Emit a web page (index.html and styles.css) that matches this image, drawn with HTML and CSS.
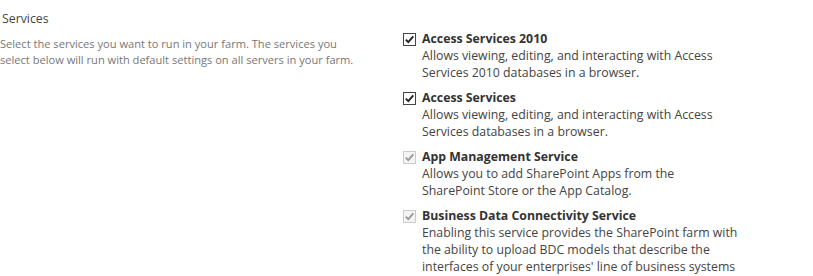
FILE: index.html
```html
<!DOCTYPE html>
<html>
<head>
<meta charset="utf-8">
<link rel="stylesheet" href="styles.css">
</head>
<body>
<div class="section">
  <div class="info">
    <h3 class="title">Services</h3>
    <p class="desc">Select the services you want to run in your farm. The services you select below will run with default settings on all servers in your farm.</p>
  </div>
  <div class="list">
    <div class="item">
      <span class="cb"><svg viewBox="0 0 13 13" width="13" height="13"><rect x="0.5" y="0.5" width="12" height="12" fill="#fff" stroke="#444"/><path d="M2.8 6.6 L5.3 9.2 L10.3 3.3" fill="none" stroke="#222" stroke-width="1.9"/></svg></span>
      <div class="text">
        <div class="name">Access Services 2010</div>
        <div class="about">Allows viewing, editing, and interacting with Access Services 2010 databases in a browser.</div>
      </div>
    </div>
    <div class="item">
      <span class="cb"><svg viewBox="0 0 13 13" width="13" height="13"><rect x="0.5" y="0.5" width="12" height="12" fill="#fff" stroke="#444"/><path d="M2.8 6.6 L5.3 9.2 L10.3 3.3" fill="none" stroke="#222" stroke-width="1.9"/></svg></span>
      <div class="text">
        <div class="name">Access Services</div>
        <div class="about">Allows viewing, editing, and interacting with Access Services databases in a browser.</div>
      </div>
    </div>
    <div class="item">
      <span class="cb"><svg viewBox="0 0 13 13" width="13" height="13"><rect x="0.5" y="0.5" width="12" height="12" fill="#f4f4f4" stroke="#ccc"/><path d="M2.8 6.6 L5.3 9.2 L10.3 3.3" fill="none" stroke="#999" stroke-width="1.9"/></svg></span>
      <div class="text">
        <div class="name">App Management Service</div>
        <div class="about">Allows you to add SharePoint Apps from the SharePoint Store or the App Catalog.</div>
      </div>
    </div>
    <div class="item">
      <span class="cb"><svg viewBox="0 0 13 13" width="13" height="13"><rect x="0.5" y="0.5" width="12" height="12" fill="#f4f4f4" stroke="#ccc"/><path d="M2.8 6.6 L5.3 9.2 L10.3 3.3" fill="none" stroke="#999" stroke-width="1.9"/></svg></span>
      <div class="text">
        <div class="name">Business Data Connectivity Service</div>
        <div class="about">Enabling this service provides the SharePoint farm with the ability to upload BDC models that describe the interfaces of your enterprises' line of business systems</div>
      </div>
    </div>
  </div>
</div>
</body>
</html>
```
FILE: styles.css
```css
html, body {
  margin: 0;
  padding: 0;
  background: #fff;
}
body {
  font-family: "Open Sans", "Noto Sans", sans-serif;
  color: #444;
}
.section {
  display: flex;
  padding-top: 10px;
}
.info {
  width: 403px;
  flex: none;
  padding-left: 2px;
  box-sizing: border-box;
}
.title {
  margin: 0;
  font-weight: normal;
  font-size: 12.3px;
  line-height: 18px;
  color: #444;
}
.desc {
  margin: 8px 0 0 -2px;
  font-size: 11.1px;
  line-height: 16px;
  color: #777;
  width: 362px;
}
.list {
  display: flex;
  flex-direction: column;
  gap: 8px;
  padding-top: 20px;
}
.item {
  display: flex;
  align-items: flex-start;
}
.cb {
  width: 13px;
  height: 13px;
  margin-top: 3px;
  margin-right: 6px;
  flex: none;
  display: flex;
}
.text {
  width: 316px;
  font-size: 12.3px;
  line-height: 17px;
}
.name {
  font-weight: bold;
  color: #333;
}
.about {
  color: #444;
}
```
